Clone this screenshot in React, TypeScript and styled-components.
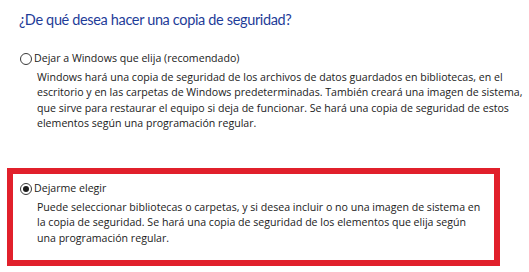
import React from "react";
import styled, { createGlobalStyle } from "styled-components";

const Global = createGlobalStyle`
  html, body { margin: 0; padding: 0; background: #ffffff; }
  body { font-family: "Open Sans", "Noto Sans", sans-serif; }
`;

const Page = styled.div`
  width: 529px;
  height: 272px;
  box-sizing: border-box;
  padding: 10px 0 0 7px;
  display: flex;
  flex-direction: column;
  background: #ffffff;
  overflow: hidden;
`;

const Title = styled.h1`
  margin: 0 0 8px 12px;
  font-family: "Lato", "Open Sans", sans-serif;
  font-weight: 400;
  font-size: 14.5px;
  letter-spacing: -0.35px;
  line-height: 20px;
  color: #1e3c98;
  white-space: nowrap;
`;

const Option = styled.div<{ $highlight?: boolean }>`
  width: 493px;
  box-sizing: border-box;
  border: 6px solid ${(p) => (p.$highlight ? "#e1202b" : "transparent")};
  padding: 7px 7px 14px 7px;
  margin-bottom: ${(p) => (p.$highlight ? "0" : "17px")};
  display: flex;
  flex-direction: column;
  gap: 4px;
`;

const RadioRow = styled.label`
  display: flex;
  align-items: center;
  gap: 2px;
  font-size: 10.6px;
  line-height: 15px;
  color: #1b1b1b;
  white-space: nowrap;
`;

const Circle = styled.span<{ $checked?: boolean }>`
  width: 12px;
  height: 12px;
  box-sizing: border-box;
  border-radius: 50%;
  border: 1px solid #3a3a3a;
  background: #ffffff;
  display: flex;
  align-items: center;
  justify-content: center;
  &::after {
    content: "";
    display: ${(p) => (p.$checked ? "block" : "none")};
    width: 6px;
    height: 6px;
    border-radius: 50%;
    background: #1b1b1b;
  }
`;

const Description = styled.p`
  margin: 0 0 0 17px;
  font-size: 10.6px;
  line-height: 15.3px;
  color: #1b1b1b;
  white-space: nowrap;
`;

export default function App() {
  return (
    <>
      <Global />
      <Page>
        <Title>¿De qué desea hacer una copia de seguridad?</Title>
        <Option>
          <RadioRow>
            <Circle />
            Dejar a Windows que elija (recomendado)
          </RadioRow>
          <Description>
            Windows hará una copia de seguridad de los archivos de datos guardados en bibliotecas, en el
            <br />
            escritorio y en las carpetas de Windows predeterminadas. También creará una imagen de sistema,
            <br />
            que sirve para restaurar el equipo si deja de funcionar. Se hará una copia de seguridad de estos
            <br />
            elementos según una programación regular.
          </Description>
        </Option>
        <Option $highlight>
          <RadioRow>
            <Circle $checked />
            Dejarme elegir
          </RadioRow>
          <Description>
            Puede seleccionar bibliotecas o carpetas, y si desea incluir o no una imagen de sistema en
            <br />
            la copia de seguridad. Se hará una copia de seguridad de los elementos que elija según
            <br />
            una programación regular.
          </Description>
        </Option>
      </Page>
    </>
  );
}
